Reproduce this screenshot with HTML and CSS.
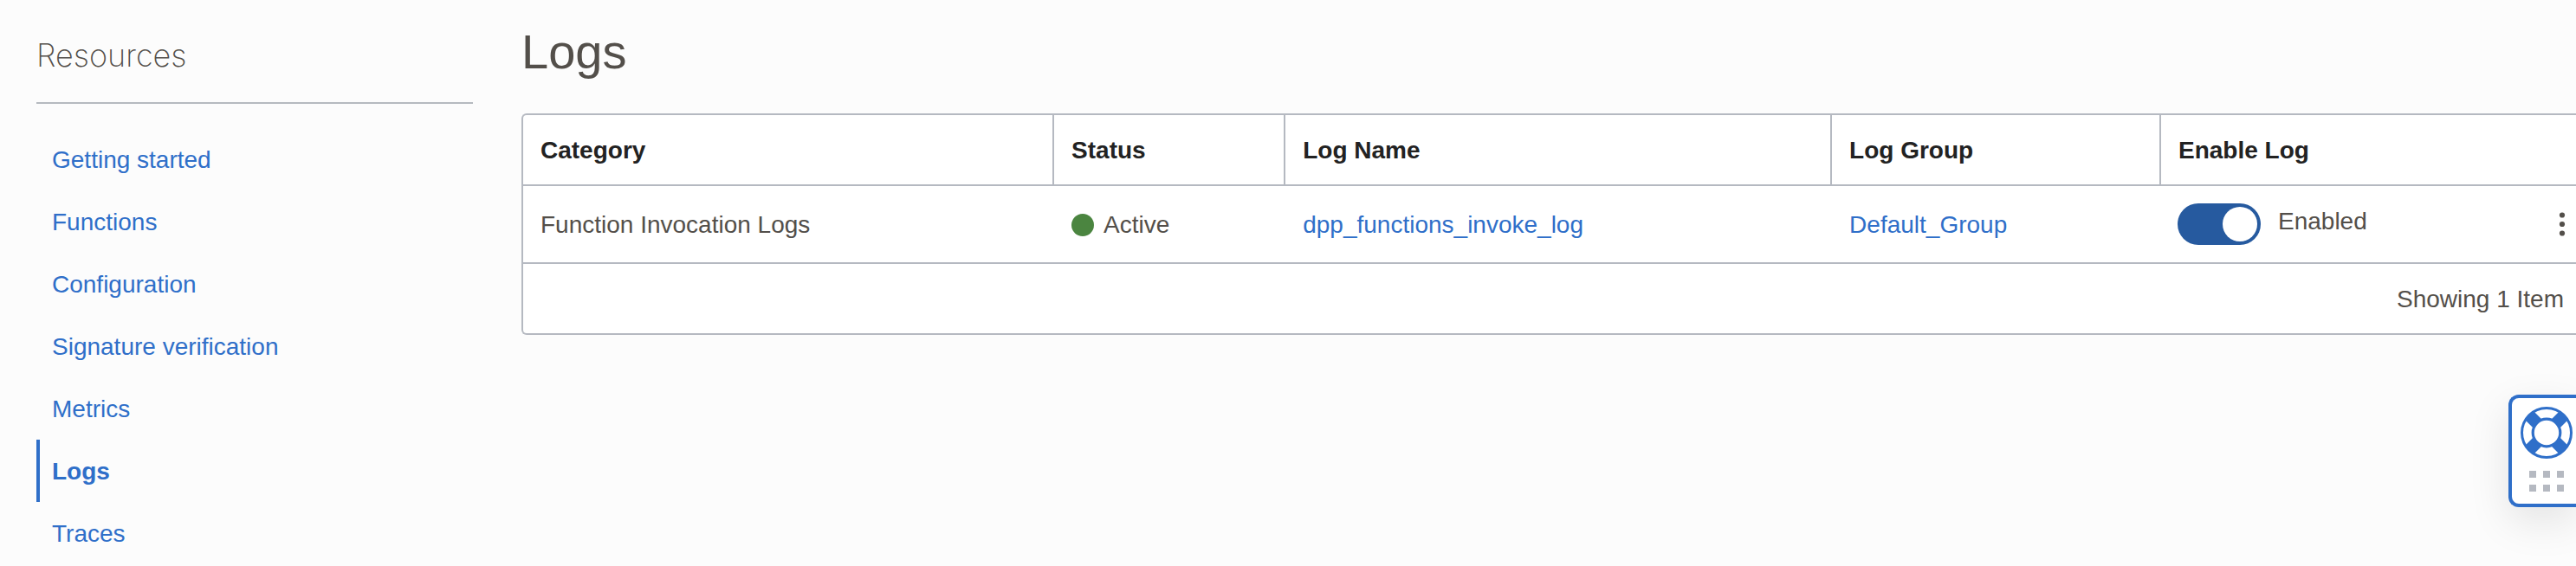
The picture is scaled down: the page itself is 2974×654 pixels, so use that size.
FILE: index.html
```html
<!DOCTYPE html>
<html lang="en">
<head>
<meta charset="utf-8">
<title>Logs</title>
<link rel="stylesheet" href="styles.css">
</head>
<body>
<div class="page">
  <aside class="sidebar">
    <h2 class="sidebar-title">Resources</h2>
    <nav class="nav" aria-label="Resources">
      <a class="nav-link" href="#">Getting started</a>
      <a class="nav-link" href="#">Functions</a>
      <a class="nav-link" href="#">Configuration</a>
      <a class="nav-link" href="#">Signature verification</a>
      <a class="nav-link" href="#">Metrics</a>
      <a class="nav-link nav-link-active" href="#" aria-current="page">Logs</a>
      <a class="nav-link" href="#">Traces</a>
    </nav>
  </aside>
  <main class="main">
    <h1 class="title">Logs</h1>
    <div class="panel">
      <table class="logs">
        <colgroup>
          <col class="col-category"><col class="col-status"><col class="col-name"><col class="col-group"><col><col class="col-actions">
        </colgroup>
        <thead>
          <tr><th>Category</th><th>Status</th><th>Log Name</th><th>Log Group</th><th colspan="2">Enable Log</th></tr>
        </thead>
        <tbody>
          <tr>
            <td>Function Invocation Logs</td>
            <td><span class="status"><span class="status-dot"></span>Active</span></td>
            <td><a class="link" href="#">dpp_functions_invoke_log</a></td>
            <td><a class="link" href="#">Default_Group</a></td>
            <td class="enable-cell">
              <div class="enable">
                <input class="toggle" type="checkbox" id="enable-log" checked>
                <label class="enable-label" for="enable-log">Enabled</label>
              </div>
            </td>
            <td class="actions">
              <button class="kebab" type="button" aria-label="Actions">
                <svg width="8" height="28" viewBox="0 0 8 28" fill="currentColor"><circle cx="4" cy="3.5" r="3.1"/><circle cx="4" cy="14" r="3.1"/><circle cx="4" cy="24.5" r="3.1"/></svg>
              </button>
            </td>
          </tr>
        </tbody>
        <tfoot>
          <tr><td class="summary" colspan="6">Showing 1 Item</td></tr>
        </tfoot>
      </table>
    </div>
  </main>
</div>
<button class="help" type="button" aria-label="Help">
  <svg class="help-ring" width="60" height="60" viewBox="0 0 60 60" fill="none" stroke="currentColor">
    <circle cx="30" cy="30" r="28.5" stroke-width="3"/>
    <path d="M10 10 50 50M50 10 10 50" stroke-width="14"/>
    <circle cx="30" cy="30" r="15.8" fill="#fff" stroke-width="3.2"/>
  </svg>
  <svg class="help-grip" width="40" height="24" viewBox="0 0 40 24" fill="currentColor"><path d="M0 0h8v8H0zM16 0h8v8h-8zM32 0h8v8h-8zM0 16h8v8H0zM16 16h8v8h-8zM32 16h8v8h-8z"/></svg>
</button>
</body>
</html>
```
FILE: styles.css
```css
* {
  box-sizing: border-box;
}

body {
  margin: 0;
  background: #fcfcfc;
  color: #534f4a;
  font: 28px/32px "Liberation Sans", Arial, sans-serif;
  overflow-x: hidden;
}

.page {
  display: flex;
  gap: 56px;
  padding-left: 42px;
}

.sidebar {
  flex: 0 0 504px;
}

.sidebar-title {
  margin: 0 0 28px;
  padding: 40px 0 30px;
  border-bottom: 2px solid #b5babf;
  font-family: Inter, "Liberation Sans", sans-serif;
  font-size: 36px;
  font-weight: 200;
  line-height: 48px;
}

.nav {
  display: flex;
  flex-direction: column;
}

.nav-link {
  padding: 21px 0 19px 14px;
  border-left: 4px solid transparent;
  color: #2f6fc9;
  text-decoration: none;
}

.nav-link-active {
  border-left-color: #2f6fc9;
  font-weight: bold;
}

.main {
  flex: 1;
  min-width: 0;
}

.title {
  margin: 0;
  padding: 28px 0 39px;
  font-size: 56px;
  font-weight: normal;
  line-height: 64px;
}

.panel {
  border: 2px solid #b5b9c1;
  border-right: 0;
  border-radius: 6px 0 0 6px;
  background: #fff;
}

.logs {
  width: 100%;
  table-layout: fixed;
  border-collapse: separate;
  border-spacing: 0;
}

.col-category {
  width: 25.87%;
}

.col-status {
  width: 11.27%;
}

.col-name {
  width: 26.62%;
}

.col-group {
  width: 16.03%;
}

.col-actions {
  width: 72px;
}

.logs th {
  padding: 25px 20px 23px;
  border-right: 2px solid #b5b9c1;
  border-bottom: 2px solid #b5b9c1;
  color: #222;
  text-align: left;
}

.logs th:last-child {
  border-right: 0;
}

.logs td {
  height: 80px;
  padding: 2px 20px 0;
}

.logs tbody td {
  height: 90px;
  border-bottom: 2px solid #b5b9c1;
}

.link {
  color: #2f6fc9;
  text-decoration: none;
}

.status {
  display: flex;
  align-items: center;
  gap: 11px;
}

.status-dot {
  width: 26px;
  height: 26px;
  border-radius: 50%;
  background: #4b8540;
}

.logs .enable-cell {
  padding: 0 19px;
}

.enable {
  display: flex;
  align-items: center;
  gap: 20px;
}

.toggle {
  display: flex;
  justify-content: flex-end;
  width: 96px;
  height: 48px;
  margin: 0;
  padding: 4px;
  border-radius: 24px;
  background: #265a9f;
  appearance: none;
}

.toggle::before {
  width: 40px;
  height: 40px;
  border-radius: 50%;
  background: #fff;
  content: "";
}

.toggle:not(:checked) {
  justify-content: flex-start;
  background: #8b8f95;
}

.enable-label {
  padding-bottom: 6px;
}

.logs .actions {
  padding: 0;
  text-align: right;
}

.kebab {
  display: inline-flex;
  align-items: center;
  justify-content: center;
  width: 32px;
  height: 48px;
  padding: 0;
  border: 0;
  background: none;
  color: #534f4a;
  vertical-align: middle;
}

.logs .summary {
  padding-right: 14px;
  text-align: right;
}

.help {
  position: fixed;
  top: 456px;
  right: 0;
  display: flex;
  flex-direction: column;
  align-items: center;
  gap: 14px;
  padding: 10px 4px 14px 10px;
  border: 4px solid #2f6fc9;
  border-right: 0;
  border-radius: 12px 0 0 12px;
  background: #fff;
  box-shadow: 0 16px 48px rgba(0, 0, 0, 0.1);
  color: #2f6fc9;
}

.help-grip {
  color: #b5b9c1;
}
```
